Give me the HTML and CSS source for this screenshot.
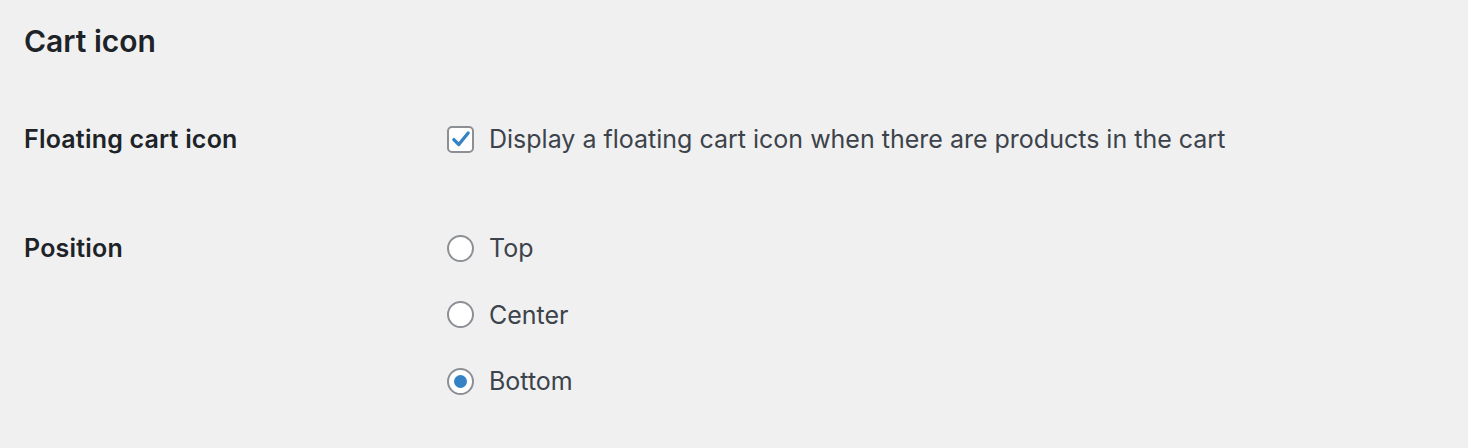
FILE: index.html
```html
<!DOCTYPE html>
<html lang="en">
<head>
<meta charset="utf-8">
<title>Cart icon</title>
<link rel="stylesheet" href="styles.css">
</head>
<body>
<div class="wrap">
  <h2 class="title">Cart icon</h2>
  <div class="form-table">
    <div class="row">
      <div class="th">Floating cart icon</div>
      <div class="td">
        <label class="opt">
          <span class="checkbox checked">
            <svg viewBox="0 0 20 20" width="22" height="22"><path d="M3.5 10.5 L8 15 L16.5 4.5" fill="none" stroke="#3582c4" stroke-width="3" stroke-linecap="round" stroke-linejoin="round"/></svg>
          </span>
          <span class="opt-text">Display a floating cart icon when there are products in the cart</span>
        </label>
      </div>
    </div>
    <div class="row row-position">
      <div class="th">Position</div>
      <div class="td radios">
        <label class="opt"><span class="radio"></span><span class="opt-text">Top</span></label>
        <label class="opt"><span class="radio"></span><span class="opt-text">Center</span></label>
        <label class="opt"><span class="radio checked"></span><span class="opt-text">Bottom</span></label>
      </div>
    </div>
  </div>
</div>
</body>
</html>
```

FILE: styles.css
```css
html, body {
  margin: 0;
  padding: 0;
  background: #f0f0f1;
}
body {
  font-family: Inter, "Noto Sans", "Liberation Sans", sans-serif;
  color: #3c434a;
}
.wrap {
  padding: 0 24px;
}
.title {
  margin: 0;
  padding-top: 22px;
  font-size: 30px;
  line-height: 38px;
  font-weight: 600;
  color: #1d2327;
}
.form-table {
  margin-top: 60px;
  display: flex;
  flex-direction: column;
  gap: 71px;
}
.row {
  display: grid;
  grid-template-columns: 423px 1fr;
}
.th {
  font-size: 25px;
  line-height: 38px;
  font-weight: 600;
  color: #1d2327;
  letter-spacing: 0.2px;
}
.td {
  display: flex;
  flex-direction: column;
}
.radios {
  gap: 28.5px;
}
.opt {
  display: flex;
  align-items: center;
  gap: 15px;
  height: 38px;
  font-size: 25px;
}
.opt-text {
  color: #3c434a;
}
.checkbox {
  box-sizing: border-box;
  width: 27px;
  height: 27px;
  border: 2px solid #8c8f94;
  border-radius: 5px;
  background: #fff;
  display: flex;
  align-items: center;
  justify-content: center;
}
.radio {
  box-sizing: border-box;
  width: 27px;
  height: 27px;
  border: 2px solid #8c8f94;
  border-radius: 50%;
  background: #fff;
  display: flex;
  align-items: center;
  justify-content: center;
}
.radio.checked::after {
  content: "";
  width: 13px;
  height: 13px;
  border-radius: 50%;
  background: #3582c4;
}
```
